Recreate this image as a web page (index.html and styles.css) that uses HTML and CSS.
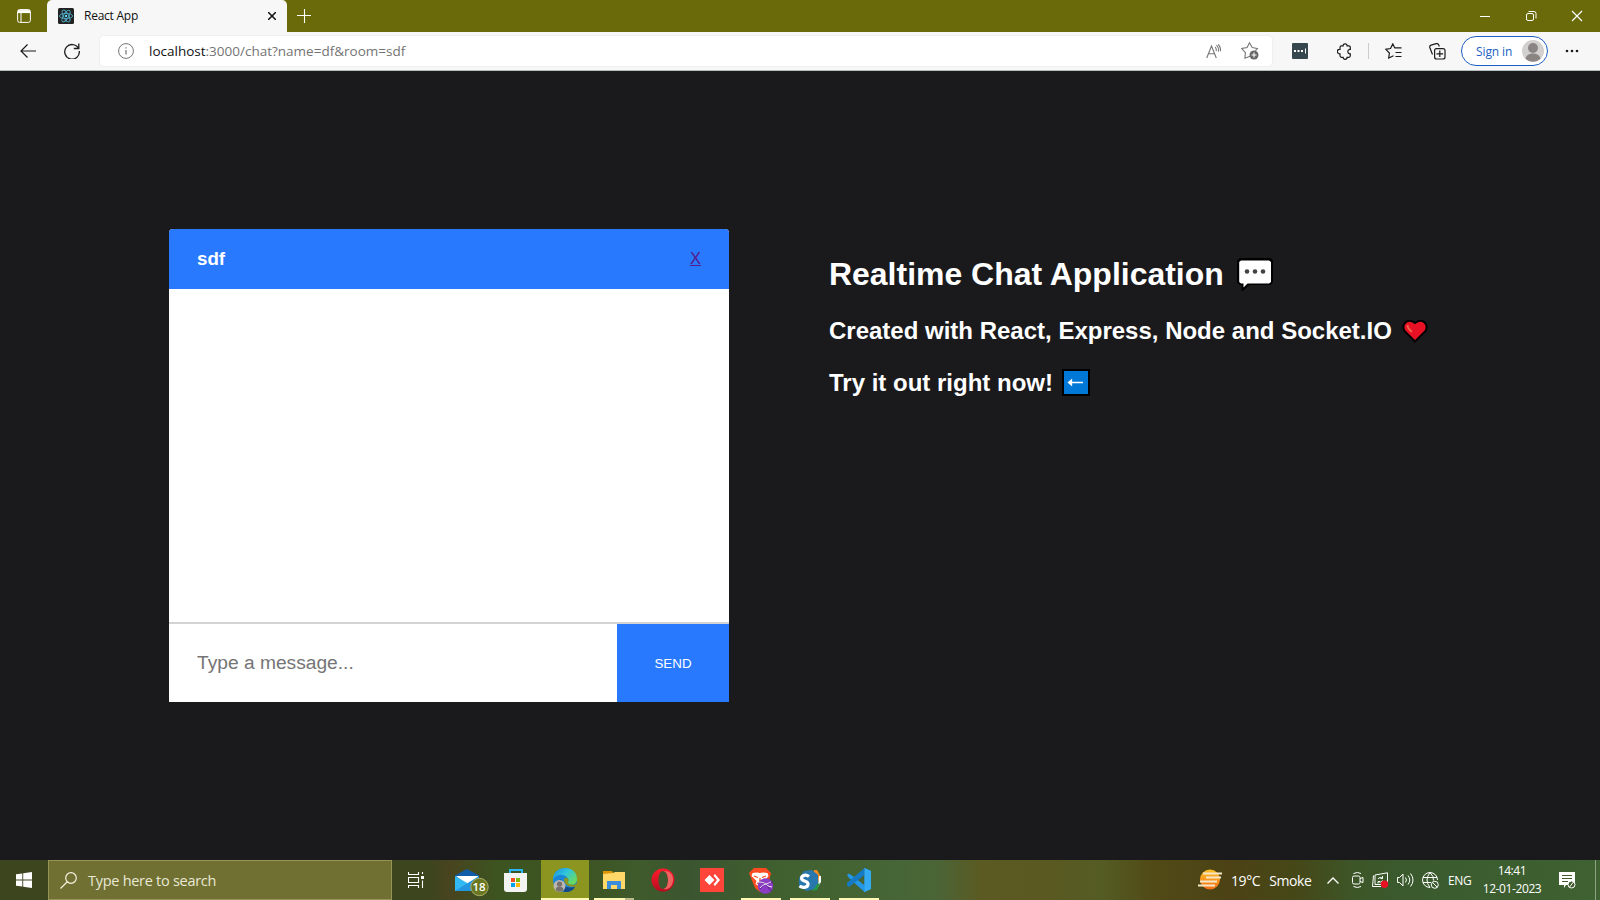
FILE: index.html
```html
<!DOCTYPE html>
<html lang="en">
<head>
<meta charset="utf-8">
<title>React App</title>
<link rel="stylesheet" href="styles.css">
</head>
<body>
<div class="screen">
  <header class="tabs">
    <div class="tab-menu">
      <svg width="14" height="14" viewBox="0 0 14 14" fill="none" stroke="#fff"><rect x=".6" y=".6" width="12.8" height="12.8" rx="2"/><path d="M1 2.6h12" stroke-width="3"/><path d="M4 4v9"/></svg>
    </div>
    <div class="tab">
      <svg width="16" height="16" viewBox="0 0 16 16" fill="none" stroke="#4fa9c4" stroke-width=".9"><rect width="16" height="16" rx="1.5" fill="#222" stroke="none"/><ellipse cx="8" cy="8" rx="6.6" ry="2.6"/><ellipse cx="8" cy="8" rx="6.6" ry="2.6" transform="rotate(60 8 8)"/><ellipse cx="8" cy="8" rx="6.6" ry="2.6" transform="rotate(120 8 8)"/><circle cx="8" cy="8" r="1.2" fill="#61dafb" stroke="none"/></svg>
      <span class="tab-title">React App</span>
      <svg width="8" height="8" viewBox="0 0 8 8" stroke="#111" stroke-width="1.5"><path d="M0 0l8 8M8 0L0 8"/></svg>
    </div>
    <svg class="new-tab" width="14" height="14" viewBox="0 0 14 14" stroke="#fff" stroke-width="1.1"><path d="M7.500 0v14M0 6.500h14"/></svg>
    <div class="window-controls">
      <svg width="46" height="32" viewBox="0 0 46 32" stroke="#fff"><path d="M18 16.500h10"/></svg>
      <svg width="46" height="32" viewBox="0 0 46 32" stroke="#fff" fill="none"><rect x="18.500" y="13.500" width="7" height="7" rx="1.500"/><path d="M20.500 11.500h5.500a2 2 0 0 1 2 2v5"/></svg>
      <svg width="46" height="32" viewBox="0 0 46 32" stroke="#fff" stroke-width="1.200"><path d="M18 11l10 10M28 11l-10 10"/></svg>
    </div>
  </header>

  <nav class="toolbar">
    <svg class="back" width="16" height="14" viewBox="0 0 16 14" fill="none" stroke="#1b1b1b" stroke-width="1.200"><path d="M16 7H1M7.500.5L1 7l6.500 6.500"/></svg>
    <svg class="reload" width="16" height="16" viewBox="0 0 16 16" fill="none" stroke="#1b1b1b" stroke-width="1.300"><path d="M14.500 5.400A7.300 7.300 0 1 0 15.300 8M14.800.5v5h-5"/></svg>
    <div class="address">
      <svg width="16" height="16" viewBox="0 0 16 16" fill="none" stroke="#757575"><circle cx="8" cy="8" r="7.400"/><path d="M8 7v4.500M8 4.200v1.400" stroke-width="1.200"/></svg>
      <span class="url"><b>localhost</b>:3000/chat?name=df&amp;room=sdf</span>
      <svg class="read" width="16" height="15" viewBox="0 0 16 15" fill="none" stroke="#757575" stroke-width="1.100"><path d="M.7 14L5.500 2l4.800 12M2.300 9.800h6.400M9.200 3a4.500 4.500 0 0 1 .9 4M10.500 1.200a7 7 0 0 1 1.800 6.500M12.300.3a9 9 0 0 1 2.200 7"/></svg>
      <svg width="18" height="18" viewBox="0 0 18 18" fill="none" stroke="#757575" stroke-width="1.100"><path d="M9 14.200L3.900 16.200l.5-5.600L.8 6.500l5.300-1L8.500.8l2.700 4.700 5.200 1-2 2.200"/><circle cx="13" cy="13" r="4.500" fill="#666" stroke="none"/><path d="M13 10.500v5M10.500 13h5" stroke="#fff"/></svg>
    </div>
    <div class="tools">
      <svg width="16" height="16" viewBox="0 0 16 16"><rect width="16" height="16" rx="1" fill="#37474f"/><path d="M2 7h2v2H2zM5.500 7h2v2h-2zM9 7h2v2H9zM13 5.500h1v5h-1z" fill="#fff"/></svg>
      <svg class="puzzle" width="16" height="17" viewBox="0 0 16 17" fill="none" stroke="#1b1b1b" stroke-width="1.200"><path d="M4.500 2.800h1.600a2 2 0 0 1 4 0h1.700q1.500 0 1.500 1.500v2h-.7a2.300 2.300 0 0 0 0 4.500h.7v2q0 1.500-1.500 1.500h-1.700a2 2 0 0 1-4 0H4.500Q3 14.300 3 12.800v-2h-.5a2.200 2.200 0 0 1 0-4.400H3v-2q0-1.600 1.500-1.600z"/></svg>
      <i class="divider"></i>
      <svg class="favs" width="17" height="16" viewBox="0 0 17 16" fill="none" stroke="#1b1b1b" stroke-width="1.200"><path d="M8.500 12.700L3.700 15l.7-5L.8 6.300l4.700-.8L7.800.9l2 4h6.700M10.500 9.500h6M10.500 13.500h6"/></svg>
      <svg class="collections" width="17" height="17" viewBox="0 0 17 17" fill="none" stroke="#1b1b1b" stroke-width="1.200"><rect x="5.600" y="5.600" width="10.400" height="10.400" rx="2"/><path d="M10.800 7.500v6.600M7.500 10.800h6.600M3.500 11.500L.8 4.500a2 2 0 0 1 1.300-2.400l5-1.400a2 2 0 0 1 2.400.8l.9 2"/></svg>
    </div>
    <div class="signin">
      <span>Sign in</span>
      <svg width="22" height="22" viewBox="0 0 22 22"><circle cx="11" cy="11" r="11" fill="#d2d0ce"/><circle cx="11" cy="8" r="5" fill="#8a8583"/><path d="M3.500 18.700c1-7 14-7 15 0a11 11 0 0 1-15 0z" fill="#8a8583"/></svg>
    </div>
    <svg class="more" width="14" height="4" viewBox="0 0 14 4" fill="#1b1b1b"><circle cx="2" cy="2" r="1.300"/><circle cx="7" cy="2" r="1.300"/><circle cx="12" cy="2" r="1.300"/></svg>
  </nav>

  <main class="page">
    <section class="chat">
      <div class="chat-head"><h3>sdf</h3><a>X</a></div>
      <div class="messages"></div>
      <form class="compose"><input type="text" placeholder="Type a message..."><button type="button">SEND</button></form>
    </section>
    <section class="intro">
      <h1>Realtime Chat Application
        <svg width="36" height="33" viewBox="0 0 36 33"><path d="M3 1h30l2 2v21l-2 2H12l-6.500 6V26H3l-2-2V3z" fill="#000" stroke="#000" stroke-width="2"/><path d="M4 2.500h28l2 1.500v20l-2 1.500H10.500L6.500 29.500v-4H4L2.200 24V4z" fill="#fff"/><g fill="#444"><circle cx="10" cy="13.500" r="2.300"/><circle cx="18" cy="13.500" r="2.300"/><circle cx="26" cy="13.500" r="2.300"/></g></svg>
      </h1>
      <h2>Created with React, Express, Node and Socket.IO
        <svg width="26" height="24" viewBox="0 0 26 24"><path d="M13 22.500L2.500 12C-1 6 5-2 13 4c8-6 14 2 10.500 8z" fill="#e81224" stroke="#000" stroke-width="2"/><path d="M5.500 6c0 3 2 5 4.500 7" fill="none" stroke="#f4614f" stroke-width="2"/></svg>
      </h2>
      <h2>Try it out right now!
        <svg class="arrow" width="28" height="27" viewBox="0 0 28 27"><rect x="1" y="1" width="26" height="25" fill="#0078d7" stroke="#000" stroke-width="2"/><path d="M21 13.500H8M9.500 11l-3 2.500 3 2.500z" fill="#fff" stroke="#fff" stroke-width="1.300"/></svg>
      </h2>
    </section>
  </main>

  <footer class="taskbar">
    <div class="start"><svg width="16" height="16" viewBox="0 0 16 16" fill="#fff"><path d="M0 2.300l6.300-.9v6.200H0zM7.200 1.200L16 0v7.600H7.200zM0 8.400h6.300v6.200L0 13.700zM7.200 8.400H16V16l-8.800-1.200z"/></svg></div>
    <div class="search">
      <svg width="17" height="17" viewBox="0 0 17 17" fill="none" stroke="#f4f3e0" stroke-width="1.200"><circle cx="11" cy="6" r="5.300"/><path d="M7.300 9.800L.5 16.500"/></svg>
      <span>Type here to search</span>
    </div>
    <div class="taskview"><svg width="17" height="16" viewBox="0 0 17 16" fill="none" stroke="#fff" stroke-width="1.100"><path d="M.5 0v2.500h10V0M.5 16v-2.500h10V16M.5 5.500h10v5H.5zM14.500 0v2M14.500 8.500V16"/><path d="M13 4h3v3h-3z" fill="#fff" stroke="none"/></svg></div>
    <div class="apps">
      <div class="app">
        <svg width="48" height="40" viewBox="0 0 48 40"><path d="M12 15.500L24 9l12 6.500V31H12z" fill="#0f5ca8"/><path d="M13 16h22v4l-11 5z" fill="#fff"/><path d="M12 16l13 7.500L36 31H12z" fill="#32b8f2"/><path d="M36 16L12 31h24z" fill="#2396df"/><circle cx="36.500" cy="27" r="8.700" fill="#6b7720" stroke="#a7ad6b"/></svg>
        <span class="badge">18</span>
      </div>
      <div class="app"><svg width="48" height="40" viewBox="0 0 48 40"><path d="M18 15v-5h12v5" fill="none" stroke="#28b6f6" stroke-width="2"/><path d="M12 13h23v16q0 3-3 3H15q-3 0-3-3z" fill="#f3f3f3"/><path d="M19 18h4v4h-4z" fill="#f25022"/><path d="M24 18h4v4h-4z" fill="#7fba00"/><path d="M19 23h4v4h-4z" fill="#00a4ef"/><path d="M24 23h4v4h-4z" fill="#ffb900"/></svg></div>
      <div class="app active">
        <svg width="48" height="40" viewBox="0 0 48 40"><defs><linearGradient id="edge" x1="0" x2="1" y1="0" y2=".7"><stop stop-color="#1b8de0"/><stop offset=".5" stop-color="#30c5dc"/><stop offset="1" stop-color="#6bdc59"/></linearGradient></defs><circle cx="24" cy="20" r="12" fill="#1a86d8"/><path d="M12 19C13 4 36 5 36 19c0 5-4 6.500-8.500 5.500-2.500-1 1-2.500-.5-6-3-5-12-5-15 1z" fill="url(#edge)"/><path d="M20 19c-1 5 4 10 14 8-2 4-6 5.500-10 5-6-1-9-9-4-13z" fill="#114a8b"/><path d="M23.500 18c3-1 5 1.500 3.500 4.500 1 2.500 5 3 9.500 1V26.500c-9 1.500-15-2.500-13-8.500z" fill="#8b951f"/><circle cx="18.500" cy="26" r="6" fill="#b9b6b3"/><circle cx="18.500" cy="24" r="2.600" fill="#77706d"/><path d="M14.500 29.500c1-4 7-4 8 0-2 3-6 3-8 0z" fill="#77706d"/></svg>
        <i class="line full"></i>
      </div>
      <div class="app"><svg width="48" height="40" viewBox="0 0 48 40"><path d="M13 11h9l2 3h-11z" fill="#db9406"/><path d="M13 14l10-1 2-1h10v17H13z" fill="#ffd869"/><path d="M17 29v-8h14v8h-4v-4h-6v4z" fill="#3a8ddb"/></svg><i class="line grouped"></i></div>
      <div class="app"><svg width="48" height="40" viewBox="0 0 48 40"><defs><linearGradient id="opera" x2="0" y2="1"><stop stop-color="#ff1b2d"/><stop offset="1" stop-color="#b50d1f"/></linearGradient></defs><path fill-rule="evenodd" d="M24 8.500a11.500 11.500 0 1 1 0 23 11.500 11.500 0 0 1 0-23zm0 2.500c-3 0-4.500 4-4.500 9s1.500 9 4.500 9 5-4 5-9-2-9-5-9z" fill="url(#opera)"/><path d="M24 11c3 0 5 4 5 9s-2 9-5 9c12 3 15-20 0-18z" fill="#ee635f"/></svg></div>
      <div class="app"><svg width="48" height="40" viewBox="0 0 48 40"><path d="M12 8h24v24H12z" fill="#ff4439"/><path d="M21.500 15l5 5-5 5-5-5zM25.500 15.500l1.500-1.500 5 6-5 6-1.500-1.500L29 20z" fill="#fff"/></svg></div>
      <div class="app"><svg width="48" height="40" viewBox="0 0 48 40"><path d="M17 8h12l5 5-3 12-8 7-5-4-6-15z" fill="#ff4a22"/><path d="M15.500 13l4.500-.5 3 .5 3-.5 4.500.5 1 3-4 5 1 3-5 3.500-5-3.500 1-3-5-5z" fill="#fff"/><path d="M17 16l4 1.500M25 17.500l4-1.500M23 18v4M20 23l3 2 3-2" stroke="#ff4a22" stroke-width="1.300" fill="none"/><circle cx="28.500" cy="26" r="7.700" fill="#8b3cc4"/><path d="M22 22c7 0 9 5 12 9M23 29c3-5 7-5 13-7" stroke="#55188a" fill="none"/><path d="M22 22c5 0 7 2 9 4l4 1M23 28c3-4 7-4 11-6" stroke="#fff" stroke-width=".9" fill="none"/></svg><i class="line"></i></div>
      <div class="app"><svg width="48" height="40" viewBox="0 0 48 40"><path d="M28 10h3l4 7-2 4-6-8z" fill="#f38a20"/><path d="M33 16h2v6l-3 5z" fill="#fff"/><path d="M34 23l-3 7-5 1 4-6z" fill="#239b42"/><path d="M18 11l8-1 6 5v8l-4 6-7 2-8-4v-9z" fill="#2878ad"/><path d="M23 16.500c-4-3-9 0-7 3 2 2.500 6 1 6 4.500s-5 4.500-8.500 2" fill="none" stroke="#fff" stroke-width="3.300"/></svg><i class="line"></i></div>
      <div class="app"><svg width="48" height="40" viewBox="0 0 48 40"><path d="M29.500 8l6.500 3v18l-6.500 3L14 18l-2-3 2-1.500 4 2.700 11.500 9V15z" fill="#2497e8"/><path d="M29.500 8v7L14 27l-2-1.500V23z" fill="#147bc4"/><path d="M29.500 8l6.500 3v18l-6.500 3z" fill="#34aaf3"/></svg><i class="line"></i></div>
    </div>
    <div class="weather">
      <svg width="25" height="22" viewBox="0 0 25 22"><defs><linearGradient id="sun" x2="0" y2="1"><stop stop-color="#ffc328"/><stop offset="1" stop-color="#f26e18"/></linearGradient></defs><circle cx="12" cy="10.500" r="10" fill="url(#sun)"/><path d="M5 4.500h19M8 8.500h15M2 12.500h17M0 16.500h17" stroke="#f5e7c7" stroke-width="1.800"/></svg>
      <span>19°C</span><span>Smoke</span>
    </div>
    <div class="tray">
      <svg class="chevron" width="12" height="7" viewBox="0 0 12 7" fill="none" stroke="#fff" stroke-width="1.300"><path d="M.5 6.500L6 1l5.500 5.500"/></svg>
      <svg width="12" height="16" viewBox="0 0 12 16" fill="none" stroke="#fff"><rect x=".5" y="4" width="7.500" height="8" rx="1.500"/><path d="M8 6.500l3-1v5l-3-1M1.500 1.500q4-2 7.500 0M1.500 14.500q4 2 7.500 0"/></svg>
      <svg width="17" height="16" viewBox="0 0 17 16" fill="none" stroke="#fff"><path d="M3 3L15.500.8v9M9 14.500H.5l1-11M3 3v9.500h6M6 7a2.700 2.700 0 0 1 4.500-.5M10.500 4v2.500H8.500M10.500 8.500a3 3 0 0 1-4 1.300M6 11.500v-2h2"/><circle cx="12.500" cy="12.300" r="3.700" fill="#e81224" stroke="none"/></svg>
      <svg width="17" height="14" viewBox="0 0 17 14" fill="none" stroke="#fff"><path d="M.5 4.500h2L6 1v12L2.500 9.500h-2zM8.500 4.500q2 2.500 0 5M11 2.500q3.500 4.500 0 9M13.500.5q5 6.500 0 13"/></svg>
      <svg width="17" height="17" viewBox="0 0 17 17" fill="none" stroke="#fff"><path d="M8 15.500A7.500 7.500 0 1 1 15.500 8M8 .5Q2 8 8 15.500M8 .5q4 4 3.500 8M1 5.500h14M1 10.500h8"/><circle cx="12.800" cy="12.800" r="3.500"/><path d="M10.500 10.500l4.500 4.500"/></svg>
      <span class="lang">ENG</span>
    </div>
    <div class="clock"><span>14:41</span><span>12-01-2023</span></div>
    <svg class="notice" width="17" height="17" viewBox="0 0 17 17"><path d="M0 0h16v13H7l-2 3v-3H0z" fill="#fff"/><path d="M3 3.500h10M3 6.500h10M3 9.500h6" stroke="#415b2e"/><circle cx="12.500" cy="12.500" r="3.500" fill="#415b2e" stroke="#fff"/><path d="M10.500 15l4-5" stroke="#fff"/></svg>
    <i class="show-desktop"></i>
  </footer>
</div>
</body>
</html>
```
FILE: styles.css
```css
* { box-sizing: border-box; }
body { margin: 0; overflow: hidden; font-family: "Liberation Sans", Arial, sans-serif; }
svg { display: block; flex: none; }
.screen { width: 1600px; height: 900px; display: grid; grid-template-rows: 32px 39px 789px 40px; background: #1a1a1d; }

.tabs { display: flex; align-items: center; background: #6b6a0b; }
.tab-menu { width: 47px; padding-left: 17px; }
.tab { width: 240px; height: 32px; padding: 0 11px; display: flex; align-items: center; background: #f7f7f7; border-radius: 5px 5px 0 0; }
.tab-title { flex: 1; padding: 0 0 1px 10px; font: 12px "Open Sans", sans-serif; letter-spacing: -.25px; color: #111; }
.new-tab { margin-left: 10px; }
.window-controls { margin-left: auto; display: flex; }

.toolbar { display: flex; align-items: center; background: #f7f7f7; border-bottom: 1px solid #b7bfbf; }
.back { margin-left: 20px; }
.reload { margin-left: 28px; }
.address { width: 1172px; height: 30px; margin-left: 20px; padding: 0 13px 0 18px; display: flex; align-items: center; background: #fff; border-radius: 4px; box-shadow: 0 0 2px #ddd; }
.url { flex: 1; padding-left: 15px; font: 13.500px "Open Sans", sans-serif; white-space: nowrap; color: #747474; }
.url b { font-weight: 400; color: #111; }
.read { margin-right: 19px; }
.tools { display: flex; align-items: center; width: 154px; margin-left: 20px; }
.puzzle { margin-left: 29px; }
.divider { width: 1px; height: 16px; margin-left: 15px; background: #ccc; }
.favs { margin-left: 16px; }
.collections { margin-left: 27px; }
.signin { width: 87px; height: 30px; margin-left: 15px; padding: 0 3px 0 14px; display: flex; align-items: center; justify-content: space-between; border: 1px solid #1b5fc4; border-radius: 15px; background: #fff; color: #1b5fc4; font: 12px "Open Sans", sans-serif; letter-spacing: -.1px; white-space: nowrap; }
.more { margin-left: 17px; }

.page { display: flex; align-items: center; padding-left: 169px; }
.chat { width: 560px; height: 473px; display: flex; flex-direction: column; background: #fff; border-radius: 4px 4px 0 0; overflow: hidden; }
.chat-head { height: 60px; flex: none; padding: 0 28px 1px; display: flex; align-items: center; justify-content: space-between; background: #2979ff; color: #fff; }
.chat-head h3 { margin: 0; font-size: 18.720px; }
.chat-head a { font-size: 16.500px; color: #551a8b; text-decoration: underline; }
.messages { flex: 1; }
.compose { height: 80px; display: flex; border-top: 2px solid #d3d3d3; }
.compose input { width: 448px; padding: 0 28px; border: 0; font: 19.200px "Liberation Sans", Arial, sans-serif; }
.compose input::placeholder { color: #757575; }
.compose button { flex: 1; border: 0; padding: 0; background: #2979ff; color: #fff; font: 13.333px "Liberation Sans", Arial, sans-serif; }
.intro { align-self: flex-start; margin-left: 100px; padding-top: 184px; color: #fff; white-space: nowrap; }
.intro h1, .intro h2 { margin: 0; display: flex; align-items: center; }
.intro h1 { height: 38px; font-size: 31.960px; gap: 13px; }
.intro h2 { height: 32px; font-size: 24px; gap: 10px; margin-top: 22px; }
.intro h2 + h2 { margin-top: 20px; }
.arrow { margin: 0 0 2px -1px; }

.taskbar { display: flex; align-items: center; color: #fff; font-family: "Open Sans", sans-serif; background: linear-gradient(90deg, #3d451f 0, #3d451f 430px, #48441f 450px, #3c5520 500px, #3d5423 590px, #3f5b2c 640px, #3b5530 690px, #40602f 780px, #466637 900px, #4b6435 940px, #5b5a23 980px, #5a5922 1050px, #545c24 1100px, #514b17 1150px, #4c4215 1230px, #454818 1300px, #3d5527 1350px, #3a5a2d 1400px, #3f6232 1600px); }
.start { width: 48px; padding-left: 16px; }
.search { width: 344px; height: 40px; padding-left: 11px; display: flex; align-items: center; gap: 11px; background: #707033; border: 1px solid #969557; color: #e9e8d4; font-size: 14.500px; letter-spacing: -.28px; }
.taskview { width: 51px; padding-left: 16px; }
.apps { display: flex; gap: 1px; }
.app { width: 48px; height: 40px; position: relative; }
.active { background: #8b951f; }
.badge { position: absolute; left: 29px; top: 19px; width: 14px; text-align: center; font: 600 11.500px/15px "Open Sans", sans-serif; }
.line { position: absolute; left: 4px; right: 4px; bottom: 0; height: 2px; background: #fff9b5; }
.full { left: 0; right: 0; }
.grouped { background: linear-gradient(90deg, #fff9b5 31px, #b8ba87 31px); }
.weather { margin-left: auto; width: 129px; display: flex; align-items: center; font-size: 14px; letter-spacing: -.4px; white-space: nowrap; }
.weather span { margin: 1px 0 0 8px; }
.weather span + span { margin-left: 9px; }
.tray { width: 144px; display: flex; align-items: center; gap: 8px; }
.chevron { margin-right: 5px; }
.lang { margin-left: 1px; font-size: 12px; letter-spacing: -.4px; }
.clock { width: 82px; display: flex; flex-direction: column; align-items: center; line-height: 18px; font-size: 12px; letter-spacing: -.4px; }
.notice { margin-left: 6px; }
.show-desktop { width: 5px; height: 40px; margin-left: 19px; border-left: 1px solid #91a185; }
```
